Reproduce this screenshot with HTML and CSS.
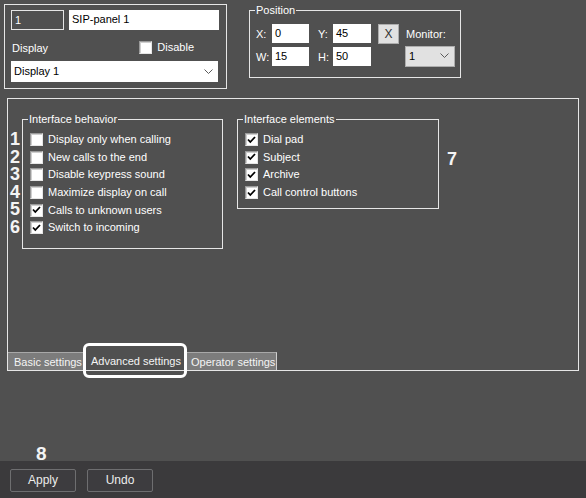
FILE: index.html
```html
<!DOCTYPE html>
<html>
<head>
<meta charset="utf-8">
<link rel="stylesheet" href="styles.css">
</head>
<body>
<div class="screen">
  <div class="top">
    <div class="ident">
      <div class="row1">
        <div class="field dark">1</div>
        <div class="field light name">SIP-panel 1</div>
      </div>
      <div class="row2">
        <span>Display</span>
        <label class="chk disable"><span class="box"></span>Disable</label>
      </div>
      <div class="select wide">
        <span>Display 1</span>
        <svg class="chev" width="9" height="6" viewBox="0 0 9 6"><polyline points="0.5,0.5 4.5,4.5 8.5,0.5" fill="none" stroke="#5a5a5a" stroke-width="1"/></svg>
      </div>
    </div>
    <fieldset class="pos">
      <legend>Position</legend>
      <div class="posgrid">
        <span class="lab">X:</span>
        <div class="field light pin">0</div>
        <span class="lab lab2">Y:</span>
        <div class="field light pin2">45</div>
        <div class="xbtn">X</div>
        <span class="mon">Monitor:</span>
        <span class="lab">W:</span>
        <div class="field light pin">15</div>
        <span class="lab lab2">H:</span>
        <div class="field light pin2">50</div>
        <div class="select grey monsel">
          <span>1</span>
          <svg class="chev" width="9" height="6" viewBox="0 0 9 6"><polyline points="0.5,0.5 4.5,4.5 8.5,0.5" fill="none" stroke="#5a5a5a" stroke-width="1"/></svg>
        </div>
      </div>
    </fieldset>
  </div>

  <div class="panel">
    <div class="panel-body">
      <fieldset class="group behavior">
        <legend>Interface behavior</legend>
        <label class="chk row"><span class="num">1</span><span class="box"></span>Display only when calling</label>
        <label class="chk row"><span class="num">2</span><span class="box"></span>New calls to the end</label>
        <label class="chk row"><span class="num">3</span><span class="box"></span>Disable keypress sound</label>
        <label class="chk row"><span class="num">4</span><span class="box"></span>Maximize display on call</label>
        <label class="chk row"><span class="num">5</span><span class="box on"><svg width="9" height="8" viewBox="0 0 9 8"><polyline points="1,3.5 3.3,6 8,1" fill="none" stroke="#000" stroke-width="1.8"/></svg></span>Calls to unknown users</label>
        <label class="chk row"><span class="num">6</span><span class="box on"><svg width="9" height="8" viewBox="0 0 9 8"><polyline points="1,3.5 3.3,6 8,1" fill="none" stroke="#000" stroke-width="1.8"/></svg></span>Switch to incoming</label>
      </fieldset>
      <fieldset class="group elements">
        <legend>Interface elements</legend>
        <label class="chk row"><span class="box on"><svg width="9" height="8" viewBox="0 0 9 8"><polyline points="1,3.5 3.3,6 8,1" fill="none" stroke="#000" stroke-width="1.8"/></svg></span>Dial pad</label>
        <label class="chk row"><span class="box on"><svg width="9" height="8" viewBox="0 0 9 8"><polyline points="1,3.5 3.3,6 8,1" fill="none" stroke="#000" stroke-width="1.8"/></svg></span>Subject</label>
        <label class="chk row"><span class="box on"><svg width="9" height="8" viewBox="0 0 9 8"><polyline points="1,3.5 3.3,6 8,1" fill="none" stroke="#000" stroke-width="1.8"/></svg></span>Archive</label>
        <label class="chk row"><span class="box on"><svg width="9" height="8" viewBox="0 0 9 8"><polyline points="1,3.5 3.3,6 8,1" fill="none" stroke="#000" stroke-width="1.8"/></svg></span>Call control buttons</label>
      </fieldset>
      <span class="bignum seven">7</span>
    </div>
    <div class="tabs">
      <div class="tab t1">Basic settings</div>
      <div class="tab t2 active">Advanced settings<span class="mark"></span></div>
      <div class="tab t3">Operator settings</div>
    </div>
  </div>

  <div class="gap">
    <span class="bignum eight">8</span>
  </div>
  <div class="bar">
    <div class="btn">Apply</div>
    <div class="btn">Undo</div>
  </div>
</div>
</body>
</html>
```
FILE: styles.css
```css
* { box-sizing: border-box; }
html, body { margin: 0; padding: 0; background: #505050; }
.screen {
  width: 586px;
  height: 498px;
  background: #505050;
  color: #ffffff;
  font-family: "Liberation Sans", Arial, sans-serif;
  font-size: 11px;
  line-height: 13px;
  display: flex;
  flex-direction: column;
  overflow: hidden;
}
.top {
  display: flex;
  align-items: flex-start;
  padding: 4px 0 0 4px;
  height: 94px;
}
.ident {
  width: 223px;
  height: 85px;
  border: 1px solid #e6e6e6;
  padding: 5px 0 0 6px;
}
.row1 { display: flex; gap: 5px; }
.field {
  height: 20px;
  padding: 3px 0 0 3px;
  font-size: 11px;
  line-height: 13px;
  white-space: nowrap;
}
.field.dark {
  width: 53px;
  border: 1px solid #e6e6e6;
  color: #fff;
  background: #505050;
}
.field.light { background: #fff; color: #000; }
.field.name { width: 150px; }
.row2 {
  display: flex;
  justify-content: space-between;
  width: 207px;
  margin-top: 11px;
  height: 13px;
  padding-left: 1px;
}
.row2 > span { padding-top: 1px; }
.chk { display: flex; align-items: center; gap: 5px; white-space: nowrap; }
.disable { margin-right: 24px; }
.box {
  width: 13px;
  height: 13px;
  background: #ffffff;
  border: 1px solid #9a9a9a;
  border-right-color: #e6e6e6;
  border-bottom-color: #e6e6e6;
  box-shadow: inset 1px 1px 0 #cfcfcf;
  display: flex;
  align-items: center;
  justify-content: center;
  flex: none;
}
.select {
  display: flex;
  align-items: center;
  justify-content: space-between;
  color: #000;
  background: #fff;
}
.select.wide {
  width: 207px;
  height: 21px;
  margin-top: 7px;
  padding: 0 5px 0 3px;
}
.chev { display: block; }

.pos {
  margin: 0 0 0 22px;
  width: 211px;
  height: 74px;
  border: 1px solid #e6e6e6;
  padding: 7px 0 0 6px;
}
.pos legend, .group legend {
  padding: 0 1px;
  font-size: 11px;
  line-height: 13px;
  color: #fff;
  white-space: nowrap;
}
.pos legend { margin-left: -1px; }
.group legend { margin-left: -2px; }
.posgrid {
  display: grid;
  grid-template-columns: 16px 37px 9px 15px 38px 7px 21px 6px 55px;
  grid-template-rows: 19px 19px;
  row-gap: 4px;
  align-items: center;
}
.lab { grid-column: 1; font-size: 11px; padding-top: 2px; }
.lab2 { grid-column: 4; }
.pin { grid-column: 2; height: 19px; font-size: 11px; padding: 3px 0 0 3px; }
.pin2 { grid-column: 5; height: 19px; font-size: 11px; padding: 3px 0 0 3px; }
.xbtn {
  grid-column: 7;
  grid-row: 1;
  height: 20px;
  align-self: start;
  background: #e1e1e1;
  border: 1px solid #adadad;
  color: #333;
  font-size: 12px;
  line-height: 18px;
  text-align: center;
}
.mon { grid-column: 9; grid-row: 1; font-size: 11px; padding-top: 1px; margin-left: 1px; white-space: nowrap; }
.monsel {
  grid-column: 9;
  grid-row: 2;
  width: 50px;
  height: 21px;
  margin-top: -1px;
  background: #e1e1e1;
  border: 1px solid #adadad;
  padding: 0 5px 0 3px;
  font-size: 11px;
}

.panel {
  margin: 4px 0 0 7px;
  width: 572px;
  height: 273px;
  border: 1px solid #e6e6e6;
  display: flex;
  flex-direction: column;
}
.panel-body {
  flex: 1;
  display: flex;
  align-items: flex-start;
  padding: 14px 0 0 14px;
}
.group {
  margin: 0;
  border: 1px solid #e6e6e6;
  padding: 5px 0 0 7px;
}
.behavior { width: 201px; height: 136px; }
.elements { width: 202px; height: 96px; margin-left: 14px; }
.row {
  position: relative;
  height: 17.6px;
  font-size: 11px;
}
.num {
  position: absolute;
  left: -20px;
  top: 0;
  font-size: 18px;
  line-height: 16px;
  font-weight: bold;
  color: #f4f4f4;
}
.bignum {
  font-size: 18px;
  line-height: 19px;
  font-weight: bold;
  color: #f4f4f4;
}
.seven { margin: 37px 0 0 8px; }

.tabs {
  display: flex;
  height: 18px;
}
.tab {
  height: 18px;
  font-size: 11px;
  line-height: 16px;
  padding-top: 1px;
  color: #f4f4f4;
  white-space: nowrap;
}
.t1 { width: 76px; padding-left: 6px; background: #7c7c7c; border-top: 1px solid #a8a8a8; }
.t2 { width: 102px; padding-left: 7px; background: #505050; position: relative; }
.t3 { width: 91px; padding-left: 5px; background: #7c7c7c; border-top: 1px solid #a8a8a8; border-right: 1px solid #cfcfcf; }
.mark {
  position: absolute;
  left: -1px;
  right: -1px;
  top: -9px;
  bottom: -8px;
  border: 3px solid #ffffff;
  border-radius: 6px;
}

.gap {
  height: 90px;
  display: flex;
  align-items: flex-end;
  padding-left: 36px;
}
.eight { font-size: 19px; line-height: 15px; }
.bar {
  flex: 1;
  background: #3b3a3c;
  display: flex;
  gap: 11px;
  padding: 8px 0 0 10px;
}
.btn {
  width: 66px;
  height: 23px;
  border: 1px solid #6e6e70;
  border-radius: 2px;
  background: #3d3c3f;
  color: #ececec;
  font-size: 12px;
  line-height: 21px;
  text-align: center;
}
```
